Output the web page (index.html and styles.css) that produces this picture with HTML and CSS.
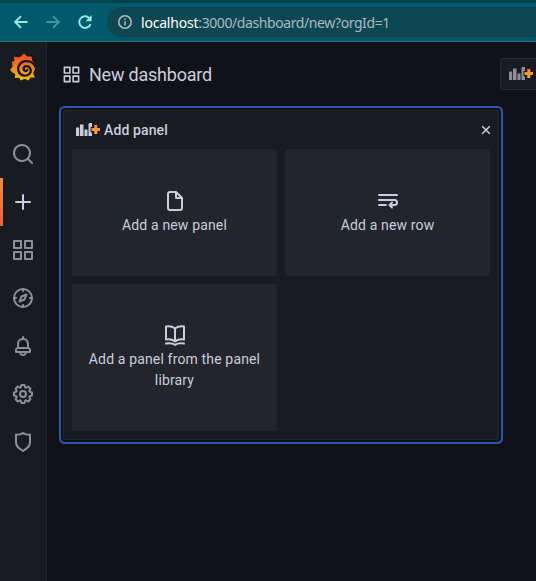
FILE: index.html
```html
<!DOCTYPE html>
<html lang="en">
<head>
<meta charset="utf-8">
<title>New dashboard - Grafana</title>
<link rel="stylesheet" href="styles.css">
</head>
<body>
<svg class="defs" width="0" height="0">
  <defs>
    <linearGradient id="sun" x1="0" y1="0" x2="0" y2="1"><stop offset="0.1" stop-color="#f0502a"/><stop offset="1" stop-color="#fcc00b"/></linearGradient>
    <linearGradient id="cross" x1="0" y1="0" x2="0" y2="1"><stop offset="0" stop-color="#f5793b"/><stop offset="1" stop-color="#fbb51c"/></linearGradient>
    <symbol id="apps" viewBox="0 0 24 24"><path d="M10,13H3a1,1,0,0,0-1,1v7a1,1,0,0,0,1,1h7a1,1,0,0,0,1-1V14A1,1,0,0,0,10,13ZM9,20H4V15H9ZM21,2H14a1,1,0,0,0-1,1v7a1,1,0,0,0,1,1h7a1,1,0,0,0,1-1V3A1,1,0,0,0,21,2ZM20,9H15V4h5Zm1,4H14a1,1,0,0,0-1,1v7a1,1,0,0,0,1,1h7a1,1,0,0,0,1-1V14A1,1,0,0,0,21,13Zm-1,7H15V15h5ZM10,2H3A1,1,0,0,0,2,3v7a1,1,0,0,0,1,1h7a1,1,0,0,0,1-1V3A1,1,0,0,0,10,2ZM9,9H4V4H9Z"/></symbol>
    <symbol id="panel-add" viewBox="0 0 24 16"><path d="M0 5.500h3.200v8.500H0zM4 2.500h3.500v11.500H4zM8.500 7.500h3v6.500h-3zM12.500 2l1-1H16v3.500l-1.500 1v4L16 11v3h-3.500z"/><path fill="url(#cross)" d="M18.300 3h3v3H24v3h-2.700v3h-3V9h-2.800V6h2.800z"/></symbol>
  </defs>
</svg>

<header class="browser">
  <div class="toolbar">
    <svg class="nav" viewBox="0 0 24 24"><path d="M20 12H5M12 5l-7 7 7 7"/></svg>
    <svg class="nav nav-off" viewBox="0 0 24 24"><path d="M4 12h15M12 5l7 7-7 7"/></svg>
    <svg class="nav" viewBox="0 0 24 24"><path d="M18.700 14.500a7 7 0 1 1-1.500-7.300L19 9"/><path class="solid" d="M20 3.500V11h-7.500z"/></svg>
    <div class="address">
      <svg class="info" viewBox="0 0 14 14"><circle cx="7" cy="7" r="6.200"/><path d="M7 6.200v4.200M7 3.500v1.500"/></svg>
      <span class="url"><b>localhost</b>:3000/dashboard/new?orgId=1</span>
    </div>
  </div>
</header>

<div class="app">
  <nav class="sidebar">
    <svg class="logo" viewBox="0 0 28 30">
      <path fill="url(#sun)" d="M15 1.500L18.300 4.500L22.500 4.500L23 8.300Q26.300 11.500 26.600 16L25.600 17.500L24.200 21.500L26 25.500L21.500 25.500L19.500 28.500L15.800 26.800L11.800 28.500L10 25.700L6 26L6.200 22L3.800 20.800L1 18L3.600 14.500L3 9.800L5.500 9L5 4.800L10.200 5.200L12 4.200Z"/>
      <path class="swirl" d="M27 16C25 10.800 20.500 8.400 16 9.200C10.500 10.200 8 15.500 9.800 19.700C11.700 24 17.500 25 20.500 21.700C23.200 18.500 21 14 17.300 14.200C14.200 14.500 13.700 18.300 16.200 19C17.200 19.200 18 18.700 18.200 18"/>
    </svg>
    <div class="items">
      <a class="item"><svg viewBox="0 0 24 24"><path d="M21.710,20.290,18,16.610A9,9,0,1,0,16.610,18l3.680,3.680a1,1,0,0,0,1.420,0A1,1,0,0,0,21.710,20.290ZM11,18a7,7,0,1,1,7-7A7,7,0,0,1,11,18Z"/></svg></a>
      <a class="item active"><svg viewBox="0 0 24 24"><path d="M19,11H13V5a1,1,0,0,0-2,0v6H5a1,1,0,0,0,0,2h6v6a1,1,0,0,0,2,0V13h6a1,1,0,0,0,0-2Z"/></svg></a>
      <a class="item"><svg><use href="#apps"/></svg></a>
      <a class="item"><svg class="line" viewBox="0 0 24 24"><circle cx="12" cy="12" r="9"/><path d="M12 3v2M12 19v2M3 12h2M19 12h2M15.500 8.500l-5 2-2 5 5-2z"/></svg></a>
      <a class="item"><svg viewBox="0 0 24 24"><path d="M18,13.180V10a6,6,0,0,0-5-5.910V3a1,1,0,0,0-2,0V4.090A6,6,0,0,0,6,10v3.180A3,3,0,0,0,4,16v2a1,1,0,0,0,1,1H8.140a4,4,0,0,0,7.720,0H19a1,1,0,0,0,1-1V16A3,3,0,0,0,18,13.180ZM8,10a4,4,0,0,1,8,0v3H8Zm4,10a2,2,0,0,1-1.720-1h3.440A2,2,0,0,1,12,20Zm6-3H6V16a1,1,0,0,1,1-1H17a1,1,0,0,1,1,1Z"/></svg></a>
      <a class="item"><svg viewBox="0 0 24 24"><path d="M21.320,9.550l-1.890-.63.89-1.780A1,1,0,0,0,20.130,6L18,3.870a1,1,0,0,0-1.150-.19l-1.780.89-.63-1.890A1,1,0,0,0,13.500,2h-3a1,1,0,0,0-.95.68L8.920,4.570,7.140,3.680A1,1,0,0,0,6,3.870L3.870,6a1,1,0,0,0-.19,1.150l.89,1.780-1.890.63A1,1,0,0,0,2,10.500v3a1,1,0,0,0,.68.95l1.890.63-.89,1.780A1,1,0,0,0,3.870,18L6,20.130a1,1,0,0,0,1.150.19l1.780-.89.63,1.890a1,1,0,0,0,.95.680h3a1,1,0,0,0,.95-.68l.63-1.890,1.780.89A1,1,0,0,0,18,20.130L20.130,18a1,1,0,0,0,.19-1.150l-.89-1.780,1.890-.63A1,1,0,0,0,22,13.500v-3A1,1,0,0,0,21.320,9.550ZM20,12.780l-1.200.4A2,2,0,0,0,17.640,16l.57,1.140-1.100,1.100L16,17.640a2,2,0,0,0-2.790,1.160l-.4,1.200H11.220l-.4-1.200A2,2,0,0,0,8,17.640l-1.140.57-1.100-1.100L6.360,16A2,2,0,0,0,5.200,13.180L4,12.780V11.220l1.200-.4A2,2,0,0,0,6.360,8L5.790,6.890l1.100-1.100L8,6.360A2,2,0,0,0,10.820,5.200l.4-1.200h1.560l.4,1.200A2,2,0,0,0,16,6.360l1.140-.57,1.100,1.100L17.640,8a2,2,0,0,0,1.160,2.790l1.200.4ZM12,8a4,4,0,1,0,4,4A4,4,0,0,0,12,8Zm0,6a2,2,0,1,1,2-2A2,2,0,0,1,12,14Z"/></svg></a>
      <a class="item"><svg viewBox="0 0 24 24"><path d="M19.630,3.650a1,1,0,0,0-.84-.2,8,8,0,0,1-6.220-1.270,1,1,0,0,0-1.140,0A8,8,0,0,1,5.210,3.450a1,1,0,0,0-.84.2A1,1,0,0,0,4,4.430v7.450a9,9,0,0,0,3.770,7.330l3.650,2.600a1,1,0,0,0,1.160,0l3.650-2.600A9,9,0,0,0,20,11.880V4.430A1,1,0,0,0,19.630,3.650ZM18,11.880a7,7,0,0,1-2.930,5.700L12,19.770,8.930,17.580A7,7,0,0,1,6,11.880V5.580a10,10,0,0,0,6-1.390,10,10,0,0,0,6,1.390Z"/></svg></a>
    </div>
  </nav>

  <main class="content">
    <div class="page-head">
      <svg class="head-icon"><use href="#apps"/></svg>
      <h1>New dashboard</h1>
      <button class="tool-button"><svg class="panel-icon"><use href="#panel-add"/></svg></button>
    </div>
    <section class="panel">
      <div class="panel-head">
        <svg class="panel-icon"><use href="#panel-add"/></svg>
        <h2>Add panel</h2>
        <svg class="close" viewBox="0 0 10 10"><path d="M1.200 1.200l7.600 7.600M8.800 1.200L1.200 8.800"/></svg>
      </div>
      <div class="cards">
        <div class="card">
          <svg viewBox="0 0 24 24"><path d="M20,8.940a1.310,1.310,0,0,0-.06-.27l0-.09a1.070,1.070,0,0,0-.19-.28h0l-6-6h0a1.070,1.070,0,0,0-.28-.19l-.1,0A1.100,1.100,0,0,0,13.060,2H7A3,3,0,0,0,4,5V19a3,3,0,0,0,3,3H17a3,3,0,0,0,3-3V9S20,9,20,8.940ZM14,5.410,16.590,8H14ZM18,19a1,1,0,0,1-1,1H7a1,1,0,0,1-1-1V5A1,1,0,0,1,7,4h5V9a1,1,0,0,0,1,1h5Z"/></svg>
          <span>Add a new panel</span>
        </div>
        <div class="card">
          <svg class="line" viewBox="0 0 24 24"><path d="M3 6h18M3 11h15.500a2.500 2.500 0 0 1 0 5H14M3 16h7M16 13.500L13.500 16l2.500 2.500"/></svg>
          <span>Add a new row</span>
        </div>
        <div class="card card-tall">
          <svg class="line" viewBox="0 0 24 24"><path d="M12 5.500C9.500 3.500 6 3 3 3.500v13c3-.5 6.500 0 9 2 2.500-2 6-2.500 9-2v-13c-3-.5-6.500 0-9 2zM12 5.500v13M3 20.500c3-.5 6.500-.3 9 1.300 2.500-1.600 6-1.800 9-1.300"/></svg>
          <span>Add a panel from the panel library</span>
        </div>
      </div>
    </section>
  </main>
</div>
</body>
</html>
```
FILE: styles.css
```css
* { box-sizing: border-box; }

body {
  margin: 0;
  height: 581px;
  overflow: hidden;
  display: flex;
  flex-direction: column;
  background: #111217;
  color: #ccccdc;
  font-family: Roboto, sans-serif;
  font-size: 14px;
}

svg { display: block; flex: none; fill: currentColor; }
.defs { position: absolute; }
.line { fill: none; stroke: currentColor; stroke-width: 2; stroke-linecap: round; stroke-linejoin: round; }

.browser {
  height: 42px;
  flex: none;
  border-top: 3px solid #03424f;
  border-bottom: 1px solid #187681;
  background: #005a6b;
}
.toolbar { display: flex; align-items: center; height: 38px; padding-left: 11px; }
.nav {
  width: 20px;
  height: 20px;
  margin-right: 12px;
  fill: none;
  stroke: #97e8e6;
  stroke-width: 2.3;
}
.nav-off { stroke: #4596a2; }
.nav .solid { fill: #97e8e6; stroke: none; }
.address {
  flex: 1;
  height: 30px;
  display: flex;
  align-items: center;
  padding-left: 11px;
  border-radius: 15px 0 0 15px;
  background: #0d4754;
}
.info { width: 14px; height: 14px; fill: none; stroke: #b0bdc2; stroke-width: 1.5; }
.url {
  margin-left: 9px;
  font-family: "Noto Sans", sans-serif;
  font-size: 14px;
  letter-spacing: -0.42px;
  color: #a6bbc1;
  white-space: nowrap;
}
.url b { font-weight: 400; letter-spacing: -0.2px; color: #fff; }

.app { flex: 1; display: flex; min-height: 0; }
.sidebar { width: 47px; flex: none; background: #181b1f; border-right: 1px solid #24262b; }
.logo { width: 28px; height: 30px; margin: 10px 0 0 9px; }
.swirl { fill: none; stroke: #181b1f; stroke-width: 2.3; stroke-linecap: round; }
.items { margin-top: 48px; }
.item {
  height: 48px;
  display: flex;
  align-items: center;
  padding-left: 11px;
  color: #8e8e9a;
}
.item svg { width: 24px; height: 24px; }
.active {
  padding-left: 8px;
  color: #ccccdc;
  border-left: 3px solid;
  border-image: linear-gradient(#ff8833, #f55f3e) 1;
}

.content { flex: 1; min-width: 0; overflow: hidden; }
.page-head { height: 68px; display: flex; align-items: center; padding: 0 0 3px 15px; }
.head-icon { width: 19px; height: 19px; }
h1 {
  margin: 1px 0 0 8px;
  font-size: 18px;
  font-weight: 400;
  line-height: 22px;
  letter-spacing: -0.22px;
}
.tool-button {
  width: 46px;
  height: 32px;
  flex: none;
  margin: 0 -10px 1px auto;
  padding: 0 0 0 8px;
  border: 1px solid #26282d;
  border-radius: 2px;
  background: #181b1f;
  color: #8e8e9a;
}
.panel-icon { width: 24px; height: 16px; }

.panel {
  width: 436px;
  height: 330px;
  margin-left: 16px;
  padding: 0 8px;
  background: #181b1f;
  border: 1px solid #25272b;
  border-radius: 2px;
  box-shadow: 0 0 0 2px #111217, 0 0 0 4px #2856b0;
}
.panel-head { height: 38px; display: flex; align-items: center; padding: 0 0 0 4px; }
h2 { margin: 0 auto 0 4px; font-size: 14px; font-weight: 500; letter-spacing: 0.12px; }
.close {
  width: 10px;
  height: 10px;
  margin-right: -1px;
  fill: none;
  stroke: currentColor;
  stroke-width: 1.5;
}
.cards { display: grid; grid-template-columns: 205px 205px; grid-template-rows: 127px 147px; gap: 8px; }
.card {
  display: flex;
  flex-direction: column;
  align-items: center;
  justify-content: center;
  padding: 0 8px;
  border-radius: 2px;
  background: #22252b;
  line-height: 21px;
  letter-spacing: 0.15px;
  text-align: center;
}
.card-tall { padding-bottom: 2px; }
.card svg { width: 24px; height: 24px; margin-bottom: 2px; }
```
